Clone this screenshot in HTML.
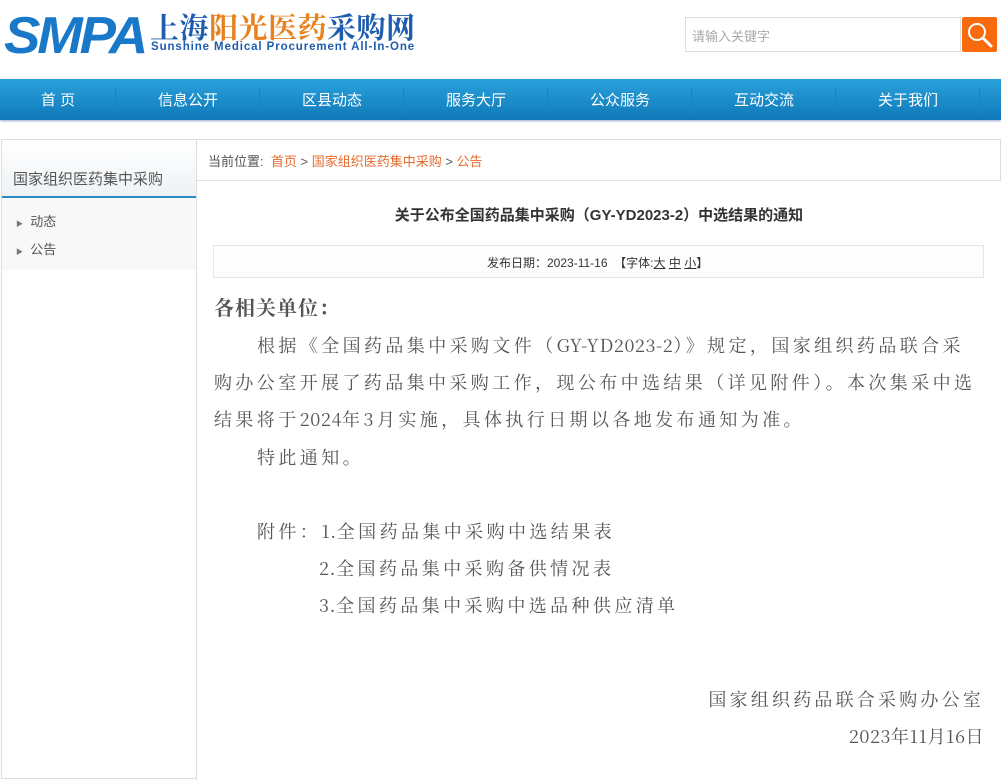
<!DOCTYPE html>
<html><head><meta charset="utf-8"><style>
*{margin:0;padding:0;box-sizing:border-box}
body{width:1001px;height:764px;overflow:hidden;background:#fff;font-family:"Liberation Sans","Noto Sans CJK SC",sans-serif;position:relative}
.abs{position:absolute}
.nav{left:0;top:79px;width:1001px;height:41px;background:linear-gradient(#2aa2dc,#0f78b8);box-shadow:0 1px 2px #9ac}
.nav span{position:absolute;top:10px;color:#fff;font-size:15px;transform:translateX(-50%);white-space:nowrap}
.nav i{position:absolute;top:8px;width:1px;height:26px;background:#1d86c2}
.box{left:1px;top:139px;width:1000px;height:640px;border:1px solid #ddd}
.side{left:2px;top:140px;width:195px;height:640px;border-right:1px solid #ddd}
.serif{font-family:"Noto Serif CJK SC",serif}
.p{font-size:18px;color:#555;letter-spacing:3.4px;white-space:nowrap;line-height:24px}
.l{letter-spacing:0.6px}
</style></head><body>
<div class="abs" style="left:4px;top:6px;font:italic bold 52px 'Liberation Sans',sans-serif;color:#1a78c8;letter-spacing:-3px;transform:scaleX(1.05);transform-origin:left">SMPA</div>
<div class="abs" style="left:150px;top:10px;font-size:29px;font-weight:bold;color:#1d5cae;font-family:'Noto Serif CJK SC',serif;line-height:34px;letter-spacing:0.5px">上海<span style="color:#e8821e">阳光医药</span>采购网</div>
<div class="abs" style="left:151px;top:41px;font-size:11.5px;font-weight:bold;color:#1d5cae;letter-spacing:0.9px">Sunshine Medical Procurement All-In-One</div>
<div class="abs" style="left:685px;top:17px;width:276px;height:35px;border:1px solid #ddd"></div>
<div class="abs" style="left:692px;top:26px;font-size:13px;color:#aaa">请输入关键字</div>
<div class="abs" style="left:962px;top:17px;width:35px;height:35px;background:#f86a0c;border-radius:2px">
<svg width="35" height="35"><circle cx="15" cy="15" r="8" fill="none" stroke="#fff" stroke-width="2"/><path d="M21 21 L29 29" stroke="#fff" stroke-width="3" stroke-linecap="round"/></svg></div>
<div class="abs nav">
<span style="left:58px">首 页</span><i style="left:115px"></i>
<span style="left:188px">信息公开</span><i style="left:259px"></i>
<span style="left:332px">区县动态</span><i style="left:403px"></i>
<span style="left:476px">服务大厅</span><i style="left:547px"></i>
<span style="left:620px">公众服务</span><i style="left:691px"></i>
<span style="left:764px">互动交流</span><i style="left:835px"></i>
<span style="left:908px">关于我们</span><i style="left:979px"></i>
</div>
<div class="abs box"></div>
<div class="abs side"></div>
<div class="abs" style="left:2px;top:141px;width:194px;height:55px;background:linear-gradient(#fff,#eef2f5)"></div>
<div class="abs" style="left:2px;top:196px;width:194px;height:2px;background:#2a8ac6"></div>
<div class="abs" style="left:84px;top:191px;width:0;height:0;border:5px solid transparent;border-bottom-color:#2a8ac6"></div>
<div class="abs" style="left:13px;top:168px;font-size:15px;color:#555">国家组织医药集中采购</div>
<div class="abs" style="left:2px;top:198px;width:194px;height:72px;background:#f8f8f8"></div>
<div class="abs" style="left:16px;top:211px;font-size:13px;color:#555"><span style="font-size:7px;color:#777">▶</span>&nbsp; 动态</div>
<div class="abs" style="left:16px;top:239px;font-size:13px;color:#555"><span style="font-size:7px;color:#777">▶</span>&nbsp; 公告</div>
<div class="abs" style="left:197px;top:180px;width:804px;height:1px;background:#e2e2e2"></div>
<div class="abs" style="left:197px;top:181px;width:804px;height:600px;background:#fff"></div>
<div class="abs" style="left:208px;top:151px;font-size:13px;color:#555">当前位置: &nbsp;<span style="color:#e66a2c">首页</span> &gt; <span style="color:#e66a2c">国家组织医药集中采购</span> &gt; <span style="color:#e66a2c">公告</span></div>
<div class="abs" style="left:197px;top:204px;width:804px;text-align:center;font-size:15px;font-weight:bold;color:#333">关于公布全国药品集中采购（GY-YD2023-2）中选结果的通知</div>
<div class="abs" style="left:213px;top:245px;width:771px;height:33px;border:1px solid #e5e5e5;background:#fdfdfd"></div>
<div class="abs" style="left:487px;top:254px;font-size:12px;color:#333">发布日期：2023-11-16 &nbsp;【字体:<u>大</u> <u>中</u> <u>小</u>】</div>
<div class="abs serif" style="left:214px;top:293px;font-size:20px;font-weight:bold;color:#555;letter-spacing:1px;line-height:28px">各相关单位：</div>
<div class="abs serif p" style="left:257px;top:333px">根据《全国药品集中采购文件（<span class="l">GY-YD2023-2</span>）》规定，国家组织药品联合采</div>
<div class="abs serif p" style="left:214px;top:370px">购办公室开展了药品集中采购工作，现公布中选结果（详见附件）。本次集采中选</div>
<div class="abs serif p" style="left:214px;top:407px">结果将于<span class="l">2024</span>年3月实施，具体执行日期以各地发布通知为准。</div>
<div class="abs serif p" style="left:257px;top:445px">特此通知。</div>
<div class="abs serif p" style="left:257px;top:519px">附件：<span class="l">1.</span>全国药品集中采购中选结果表</div>
<div class="abs serif p" style="left:319px;top:556px"><span class="l">2.</span>全国药品集中采购备供情况表</div>
<div class="abs serif p" style="left:319px;top:593px"><span class="l">3.</span>全国药品集中采购中选品种供应清单</div>
<div class="abs serif p" style="right:17px;top:687px;letter-spacing:3.2px">国家组织药品联合采购办公室</div>
<div class="abs serif p" style="right:17px;top:724px;letter-spacing:0.5px">2023年11月16日</div>
</body></html>
